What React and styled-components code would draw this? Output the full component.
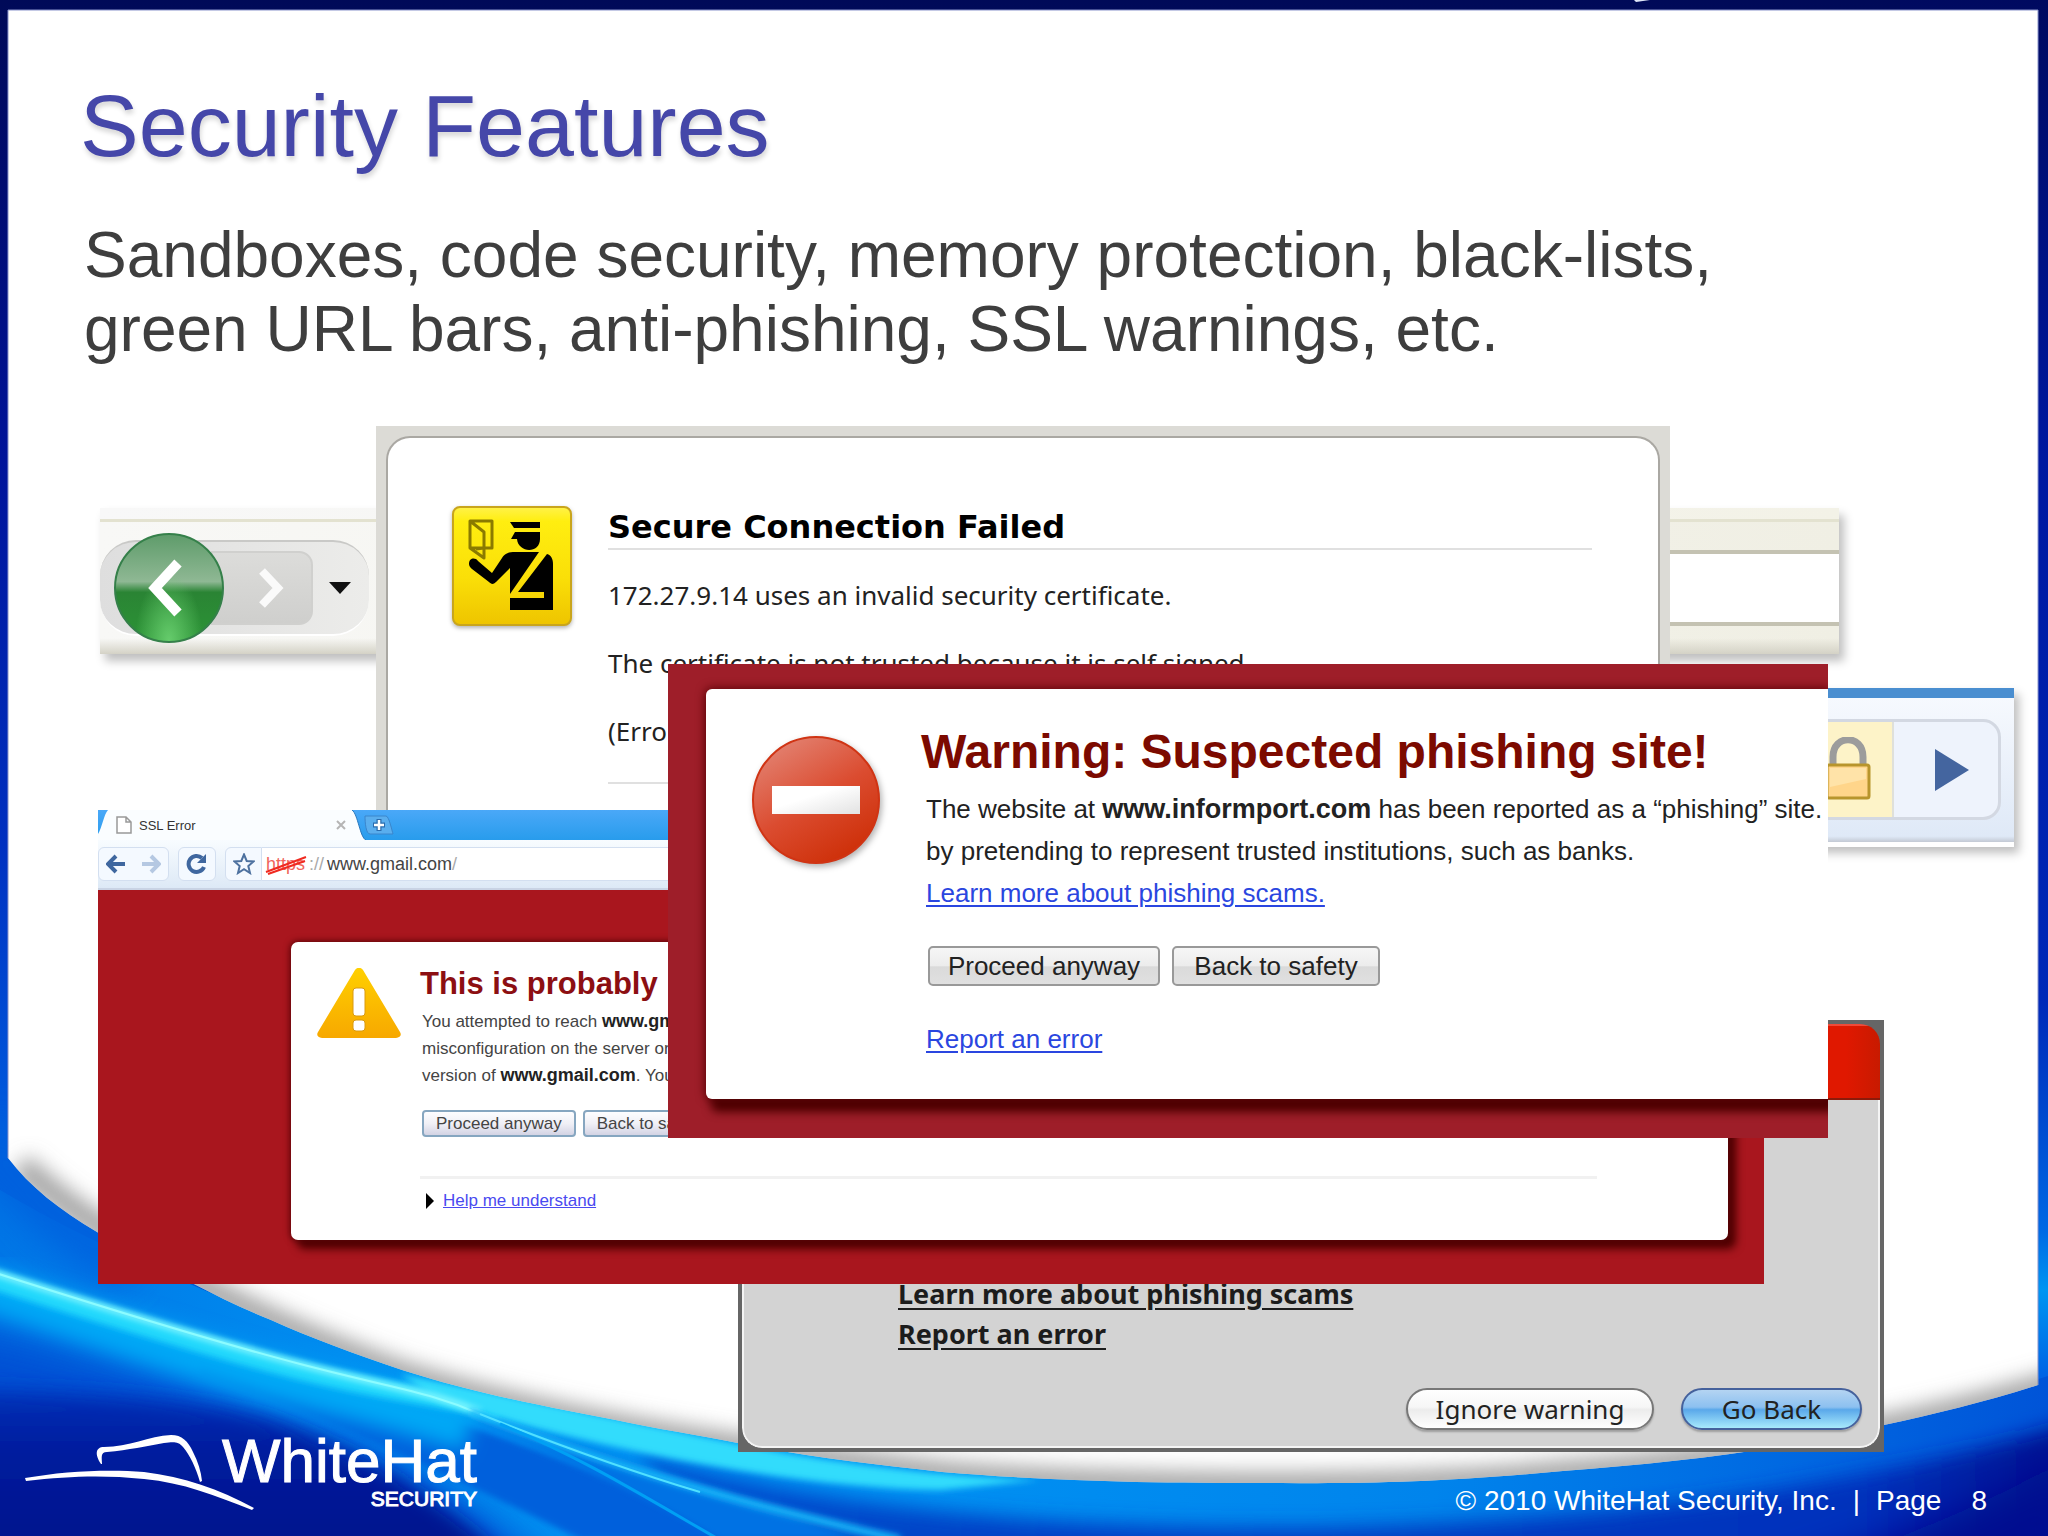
import styled, { createGlobalStyle } from "styled-components";

const sans = '"Liberation Sans", Arial, sans-serif';
const humanist = '"Noto Sans", "Open Sans", sans-serif';

const App = () => {
	return (
		<>
			<GlobalStyle />
			<Slide>
				<Backdrop />
				<Header>
					<Title>Security Features</Title>
					<Summary>
						Sandboxes, code security, memory protection, black-lists, green URL bars, anti-phishing,
						SSL warnings, etc.
					</Summary>
				</Header>
				<Collage>
					<FirefoxToolbar />
					<SafariToolbar />
					<SecureConnection />
					<MacWarning />
					<ChromeWindow />
					<PhishingWarning />
				</Collage>
				<Footer>
					<Logo>
						<HatIcon />
						<Wordmark>
							<Brand>WhiteHat</Brand>
							<BrandSub>SECURITY</BrandSub>
						</Wordmark>
					</Logo>
					<Copyright>
						<span>© 2010 WhiteHat Security, Inc.</span>
						<span>|</span>
						<span>Page</span>
						<PageNumber>8</PageNumber>
					</Copyright>
				</Footer>
			</Slide>
		</>
	);
};

export default App;

const sheetPath =
	"M8 10H2038V1385C1985 1402 1935 1414 1884 1425C1790 1449 1680 1462 1563 1471C1450 1482 1360 1484 1282 1483C1230 1483 1180 1483 1136 1482C1065 1480 1000 1477 942 1472C880 1465 820 1458 763 1448C715 1438 670 1431 630 1423C580 1413 530 1404 485 1393C455 1386 428 1378 402 1370C355 1354 311 1338 271 1320C243 1309 219 1297 194 1284C159 1268 128 1252 97 1232C60 1210 30 1187 8 1158Z";

const Backdrop = () => (
	<BackdropSvg viewBox='0 0 2048 1536' preserveAspectRatio='none' aria-hidden='true'>
		<defs>
			<linearGradient id='night' x1='0' y1='0' x2='0' y2='1'>
				<stop offset='0' stopColor='#000a58' />
				<stop offset='.12' stopColor='#000c70' />
				<stop offset='.3' stopColor='#00149a' />
				<stop offset='.55' stopColor='#0030c0' />
				<stop offset='.72' stopColor='#0058dc' />
				<stop offset='.8' stopColor='#0068e0' />
				<stop offset='1' stopColor='#0028a8' />
			</linearGradient>
			<linearGradient id='edge' x1='0' y1='0' x2='0' y2='1'>
				<stop offset='0' stopColor='#000a60' />
				<stop offset='.3' stopColor='#0018a0' />
				<stop offset='.65' stopColor='#0028b8' />
				<stop offset='.8' stopColor='#0068e4' />
				<stop offset='.84' stopColor='#0095f2' />
				<stop offset='.9' stopColor='#0060e4' />
				<stop offset='1' stopColor='#0018a0' />
			</linearGradient>
			<linearGradient id='sea' x1='0' y1='0' x2='1' y2='0'>
				<stop offset='0' stopColor='#0076e6' />
				<stop offset='.2' stopColor='#0092f2' />
				<stop offset='.45' stopColor='#0090f2' />
				<stop offset='.7' stopColor='#0084ec' />
				<stop offset='.9' stopColor='#0064e0' />
				<stop offset='1' stopColor='#0054d8' />
			</linearGradient>
			<linearGradient id='deep' x1='0' y1='0' x2='1' y2='0'>
				<stop offset='0' stopColor='#0050d0' />
				<stop offset='.25' stopColor='#0042c6' />
				<stop offset='.55' stopColor='#003cc0' />
				<stop offset='.85' stopColor='#0030bc' />
				<stop offset='1' stopColor='#00108c' />
			</linearGradient>
			<linearGradient id='abyss' x1='0' y1='1380' x2='0' y2='1536' gradientUnits='userSpaceOnUse'>
				<stop offset='0' stopColor='#0034bc' />
				<stop offset='.45' stopColor='#001c9e' />
				<stop offset='1' stopColor='#00148e' />
			</linearGradient>
			<filter id='soft4' x='-20%' y='-20%' width='140%' height='140%'>
				<feGaussianBlur stdDeviation='3' />
			</filter>
			<filter id='soft12' x='-20%' y='-20%' width='140%' height='160%'>
				<feGaussianBlur stdDeviation='10' />
			</filter>
			<filter id='soft24' x='-20%' y='-30%' width='140%' height='160%'>
				<feGaussianBlur stdDeviation='20' />
			</filter>
			<clipPath id='sheet'>
				<path d={sheetPath} />
			</clipPath>
		</defs>
		<rect width='2048' height='1536' fill='url(#night)' />
		<rect x='1900' width='148' height='1536' fill='url(#edge)' />
		<path
			d='M0 1190C100 1250 300 1340 480 1380C800 1460 1100 1480 1300 1478C1600 1478 1850 1440 2048 1376V1536H0Z'
			fill='url(#sea)'
		/>
		<path d='M-20 1130C20 1190 70 1230 130 1270' stroke='#0060de' strokeWidth='50' fill='none' filter='url(#soft24)' />
		{/* dark water under the main wave */}
		<path d='M-80 1320C60 1340 240 1400 350 1440C440 1480 520 1530 600 1620H-80Z' fill='#0050d4' filter='url(#soft24)' />
		<path d='M-80 1390C60 1392 180 1396 270 1420C360 1450 450 1500 540 1590H-80Z' fill='url(#abyss)' filter='url(#soft12)' />
		<path
			d='M640 1455C800 1500 1000 1528 1300 1528C1600 1524 1860 1488 2080 1420V1600H700C690 1560 660 1500 640 1455Z'
			fill='url(#deep)'
			filter='url(#soft12)'
		/>
		<path d='M1780 1580C1900 1540 2000 1500 2080 1450V1600H1780Z' fill='#001090' filter='url(#soft24)' />
		{/* folds running down to the right */}
		<path d='M200 1372C330 1420 460 1480 582 1540H760C600 1470 420 1400 200 1352Z' fill='#0060dc' filter='url(#soft4)' />
		<path d='M440 1405C540 1450 640 1490 720 1540H860C740 1500 580 1440 440 1405Z' fill='#0072e4' filter='url(#soft4)' />
		{/* bright crest */}
		<path
			d='M-20 1286C100 1325 200 1360 300 1385S400 1410 470 1430'
			stroke='#00a8f6'
			strokeWidth='44'
			fill='none'
			filter='url(#soft12)'
		/>
		<path
			d='M-20 1276C80 1308 200 1346 300 1371S440 1395 500 1412'
			stroke='#22d8fc'
			strokeWidth='18'
			fill='none'
			filter='url(#soft4)'
		/>
		<path
			d='M400 1374C520 1398 640 1424 780 1452C860 1466 940 1476 1040 1480L940 1490C800 1488 600 1450 440 1402Z'
			fill='#30dcfc'
			filter='url(#soft4)'
		/>
		<path
			d='M-20 1268C80 1300 200 1338 300 1364S430 1392 480 1412'
			stroke='#8cfcff'
			strokeWidth='6'
			fill='none'
			filter='url(#soft4)'
		/>
		<path d='M-20 1268C80 1300 200 1338 300 1364S430 1392 480 1414' stroke='#8cfcff' strokeWidth='2' fill='none' />
		<path
			d='M470 1412C560 1446 660 1480 770 1508S860 1530 900 1540'
			stroke='#18b8fa'
			strokeWidth='8'
			fill='none'
			filter='url(#soft4)'
		/>
		<path d='M480 1414C560 1446 640 1474 700 1492' stroke='#50e0ff' strokeWidth='2' fill='none' />
		<path d='M500 1424C580 1456 650 1500 720 1540' stroke='#00a0f4' strokeWidth='3' fill='none' />
		<path d={sheetPath} fill='#fff' />
		<path d='M8 1158V10H2038V1385' fill='none' stroke='#8a94cc' strokeWidth='1' />
		<g clipPath='url(#sheet)'>
			<path
				d='M20 1165C100 1240 240 1314 402 1374C560 1424 760 1452 942 1474C1080 1486 1400 1492 1563 1473C1750 1460 1930 1422 2060 1382'
				stroke='#888'
				strokeWidth='26'
				strokeOpacity='.75'
				fill='none'
				filter='url(#soft12)'
			/>
		</g>
		<path d='M1634 0H1650L1636 2Z' fill='#dfe6f8' />
	</BackdropSvg>
);

const HatIcon = () => (
	<svg width='232' height='76' viewBox='0 0 232 76' fill='#fff' aria-hidden='true'>
		<path d='M1 43C40 36 85 34 120 37C160 42 195 54 230 73L228 75C190 60 160 48 120 44C80 40 45 41 2 46Z' />
		<path d='M77 29C71 20 71 12 80 12C105 12 125 1 147 0C158 0 164 6 169 17C174 27 177 36 178 46L176 47C172 33 166 20 159 12C154 6 149 7 140 8C122 11 105 15 83 17C76 17 78 23 78 29Z' />
	</svg>
);

const FirefoxToolbar = () => (
	<FirefoxBar>
		<FirefoxStrip />
		<FirefoxRow>
			<NavPill>
				<BackButton aria-label='Back'>
					<svg width='48' height='60' viewBox='0 0 48 60' aria-hidden='true'>
						<path d='M33 5L10 30L33 55' stroke='#fff' strokeWidth='10' fill='none' />
					</svg>
				</BackButton>
				<ForwardButton aria-label='Forward'>
					<svg width='30' height='40' viewBox='0 0 30 40' aria-hidden='true'>
						<path d='M6 3L22 20L6 37' stroke='#fafafa' strokeWidth='8' fill='none' />
					</svg>
				</ForwardButton>
				<HistoryButton aria-label='Recent pages'>
					<svg width='24' height='14' viewBox='0 0 24 14' aria-hidden='true'>
						<path d='M1 1H23L12 13Z' fill='#111' />
					</svg>
				</HistoryButton>
			</NavPill>
			<FirefoxField aria-label='Address' />
		</FirefoxRow>
	</FirefoxBar>
);

const SafariToolbar = () => (
	<BlueBar>
		<BlueField>
			<LockCell>
				<svg width='48' height='66' viewBox='0 0 48 66' aria-hidden='true'>
					<path d='M9 30V20C9 -3 39 -3 39 20V30' stroke='#9c9c9c' strokeWidth='7' fill='none' />
					<rect x='3' y='28' width='42' height='33' rx='2' fill='#ffd58a' stroke='#b8952c' strokeWidth='3' />
					<path d='M6 31H42V42L6 50Z' fill='#ffe3a8' />
				</svg>
			</LockCell>
			<GoButton aria-label='Go'>
				<svg width='36' height='42' viewBox='0 0 36 42' aria-hidden='true'>
					<path d='M1 0L35 21L1 42Z' fill='#44659f' />
				</svg>
			</GoButton>
		</BlueField>
	</BlueBar>
);

const SecureConnection = () => (
	<SecureFrame>
		<SecureCard>
			<OfficerIcon />
			<SecureText>
				<SecureTitle>Secure Connection Failed</SecureTitle>
				<p>172.27.9.14 uses an invalid security certificate.</p>
				<p>The certificate is not trusted because it is self signed.</p>
				<p>(Error</p>
				<SecureRule />
			</SecureText>
		</SecureCard>
	</SecureFrame>
);

const OfficerIcon = () => (
	<OfficerSvg viewBox='0 0 120 120' aria-hidden='true'>
		<defs>
			<linearGradient id='yellow' x1='0' y1='0' x2='0' y2='1'>
				<stop offset='0' stopColor='#fff24a' />
				<stop offset='.12' stopColor='#ffee10' />
				<stop offset='.6' stopColor='#fadf08' />
				<stop offset='1' stopColor='#eec400' />
			</linearGradient>
		</defs>
		<rect x='1' y='1' width='118' height='118' rx='7' fill='url(#yellow)' stroke='#c9a51c' strokeWidth='2' />
		<path d='M18 15H40V42H18ZM18 15L32 26V52L18 42M32 42L24 43' fill='none' stroke='#8a7a00' strokeWidth='3' strokeLinejoin='round' />
		<path d='M58 16H88V22H62Z' />
		<path d='M63 26H88V33C88 48 66 47 65 33H59Z' />
		<path d='M17 58C17 52 23 51 26 55L40 67L50 52C53 47 57 46 63 46H87L58 88V62L44 76C41 79 39 78 37 76L20 63C18 61 17 60 17 58Z' />
		<path d='M95 48C99 49 101 53 101 58V104H58V92H92V86H66Z' />
	</OfficerSvg>
);

const MacWarning = () => (
	<MacFrame>
		<MacPanel>
			<MacBanner />
			<MacBody>
				<MacLinks>
					<a href='#learn'>Learn more about phishing scams</a>
					<a href='#report'>Report an error</a>
				</MacLinks>
				<MacActions>
					<AquaButton $width={248}>Ignore warning</AquaButton>
					<AquaButton $width={181} $primary>
						Go Back
					</AquaButton>
				</MacActions>
			</MacBody>
		</MacPanel>
	</MacFrame>
);

const ChromeWindow = () => (
	<ChromeFrame>
		<TabStrip>
			<svg width='270' height='30' viewBox='0 0 270 30' aria-hidden='true'>
				<path d='M0 30V24C4 18 6 4 10 0H254C260 4 262 28 268 30Z' fill='#fafdff' />
				<path d='M254 0C260 4 262 28 268 30' stroke='#2a78bc' fill='none' />
			</svg>
			<Tab>
				<svg width='16' height='18' viewBox='0 0 16 18' aria-hidden='true'>
					<path d='M1 1H10L15 6V17H1ZM10 1V6H15' fill='#fff' stroke='#999' strokeWidth='1.5' />
				</svg>
				<span>SSL Error</span>
				<TabClose aria-label='Close tab'>
					<svg width='10' height='10' viewBox='0 0 10 10' aria-hidden='true'>
						<path d='M1 1L9 9M9 1L1 9' stroke='#b5b5b5' strokeWidth='2' />
					</svg>
				</TabClose>
			</Tab>
			<NewTab aria-label='New tab'>
				<svg width='32' height='20' viewBox='0 0 32 20' aria-hidden='true'>
					<path d='M3 1H24C27 1 30 16 31 19H8C4 19 3 8 3 1Z' fill='#5aaeee' stroke='#3a86cc' />
					<path d='M17 4V16M11 10H23' stroke='#2a6cae' strokeWidth='5' />
					<path d='M17 5V15M12 10H22' stroke='#fff' strokeWidth='2.5' />
				</svg>
			</NewTab>
		</TabStrip>
		<ChromeToolbar>
			<ToolGroup $width={71}>
				<button aria-label='Back'>
					<svg width='20' height='20' viewBox='0 0 20 20' aria-hidden='true'>
						<path d='M19 10H4M10 2L2 10L10 18' stroke='#3f679f' strokeWidth='4' fill='none' />
					</svg>
				</button>
				<button aria-label='Forward'>
					<svg width='20' height='20' viewBox='0 0 20 20' aria-hidden='true'>
						<path d='M1 10H16M10 2L18 10L10 18' stroke='#b5c8e2' strokeWidth='4' fill='none' />
					</svg>
				</button>
			</ToolGroup>
			<ToolGroup $width={38}>
				<button aria-label='Reload'>
					<svg width='22' height='22' viewBox='0 0 22 22' aria-hidden='true'>
						<path d='M18 14A8 8 0 1 1 16 5' stroke='#3f679f' strokeWidth='4' fill='none' />
						<path d='M20 1V10H11Z' fill='#3f679f' />
					</svg>
				</button>
			</ToolGroup>
			<ToolGroup $width={37} $joined>
				<button aria-label='Bookmark'>
					<svg width='22' height='22' viewBox='0 0 22 22' aria-hidden='true'>
						<path
							d='M11 1.5L13.7 8L20.5 8.5L15.3 13L17 20L11 16.2L5 20L6.7 13L1.5 8.5L8.3 8Z'
							stroke='#4d719f'
							strokeWidth='2'
							fill='#f4f9ff'
						/>
					</svg>
				</button>
			</ToolGroup>
			<Omnibox>
				<BadScheme>
					https
					<svg width='44' height='20' viewBox='0 0 44 20' aria-hidden='true'>
						<path d='M2 17L42 2M4 19L41 6' stroke='#f02a20' strokeWidth='2' fill='none' />
					</svg>
				</BadScheme>
				<Faint>://</Faint>www.gmail.com<Faint>/</Faint>
			</Omnibox>
		</ChromeToolbar>
		<ChromePage>
			<SslCard>
				<TriangleIcon />
				<SslText>
					<SslTitle>This is probably</SslTitle>
					<SslCopy>
						You attempted to reach <b>www.gm</b>
						<br />
						misconfiguration on the server or
						<br />
						version of <b>www.gmail.com</b>. You
					</SslCopy>
					<SslActions>
						<SmallButton>Proceed anyway</SmallButton>
						<SmallButton>Back to safety</SmallButton>
					</SslActions>
					<SslRule />
					<HelpRow>
						<svg width='8' height='16' viewBox='0 0 8 16' aria-hidden='true'>
							<path d='M0 0L8 8L0 16Z' />
						</svg>
						<a href='#help'>Help me understand</a>
					</HelpRow>
				</SslText>
			</SslCard>
		</ChromePage>
	</ChromeFrame>
);

const TriangleIcon = () => (
	<TriangleSvg viewBox='0 0 84 70' aria-hidden='true'>
		<defs>
			<linearGradient id='amber' x1='0' y1='0' x2='0' y2='1'>
				<stop offset='0' stopColor='#ffd000' />
				<stop offset='1' stopColor='#f7a800' />
			</linearGradient>
		</defs>
		<path d='M38 2C40 -1 44 -1 46 2L83 64C85 67 83 70 79 70H5C1 70 -1 67 1 64Z' fill='url(#amber)' />
		<rect x='36' y='20' width='12' height='28' rx='3' fill='#fff' stroke='#d99a10' />
		<rect x='36' y='52' width='12' height='11' rx='3' fill='#fff' stroke='#d99a10' />
	</TriangleSvg>
);

const PhishingWarning = () => (
	<PhishingFrame>
		<PhishingCard>
			<NoEntryIcon />
			<div>
				<PhishingTitle>Warning: Suspected phishing site!</PhishingTitle>
				<PhishingCopy>
					<p>
						The website at <b>www.informport.com</b> has been reported as a “phishing” site.
					</p>
					<p>by pretending to represent trusted institutions, such as banks.</p>
					<a href='#scams'>Learn more about phishing scams.</a>
					<PhishingActions>
						<LargeButton $width={232}>Proceed anyway</LargeButton>
						<LargeButton $width={208}>Back to safety</LargeButton>
					</PhishingActions>
					<a href='#error'>Report an error</a>
				</PhishingCopy>
			</div>
		</PhishingCard>
	</PhishingFrame>
);

const NoEntryIcon = () => (
	<NoEntrySvg viewBox='0 0 128 128' aria-hidden='true'>
		<defs>
			<linearGradient id='stop' x1='.2' y1='0' x2='.8' y2='1'>
				<stop offset='0' stopColor='#e38474' />
				<stop offset='.5' stopColor='#db4c30' />
				<stop offset='1' stopColor='#cc2c04' />
			</linearGradient>
			<linearGradient id='bar' x1='0' y1='0' x2='1' y2='1'>
				<stop offset='.4' stopColor='#fff' />
				<stop offset='1' stopColor='#e2e2e2' />
			</linearGradient>
		</defs>
		<circle cx='64' cy='64' r='63' fill='url(#stop)' stroke='#d03414' strokeWidth='2' />
		<rect x='20' y='50' width='88' height='28' fill='url(#bar)' />
	</NoEntrySvg>
);

const GlobalStyle = createGlobalStyle`
	* {
		box-sizing: border-box;
	}

	body {
		margin: 0;
		font-family: ${sans};
	}

	h1, h2, p {
		margin: 0;
	}

	button {
		margin: 0;
		padding: 0;
		border: 0;
		background: none;
		color: inherit;
		font: inherit;
	}

	svg {
		display: block;
		flex-shrink: 0;
	}
`;

const Slide = styled.main`
	position: relative;
	display: flex;
	flex-direction: column;
	min-height: 100vh;
	overflow: hidden;
`;

const BackdropSvg = styled.svg`
	position: absolute;
	inset: 0;
	width: 100%;
	height: 100%;
`;

const Header = styled.header`
	position: relative;
	padding: 77px 80px 34px;
`;

const Title = styled.h1`
	font-size: 88px;
	font-weight: 400;
	line-height: 98px;
	color: #4547a9;
	text-shadow: 1px 4px 5px rgba(0, 0, 0, 0.16);
`;

const Summary = styled.p`
	max-width: 1700px;
	margin-top: 43px;
	padding-left: 4px;
	font-size: 64px;
	line-height: 74px;
	color: #3e3e3e;
`;

const Collage = styled.section`
	position: relative;
	flex: 1;
	min-height: 1034px;
`;

/* every captured window sits freely on the collage */
const Capture = styled.article`
	position: absolute;
	display: flex;
	flex-direction: column;
	overflow: hidden;
`;

const FirefoxBar = styled(Capture)`
	top: 108px;
	left: 100px;
	right: 209px;
	overflow: visible;
	box-shadow: 5px 7px 9px rgba(0, 0, 0, 0.25);
`;

const FirefoxStrip = styled.div`
	height: 14px;
	background: linear-gradient(90deg, #f8f8f8, #f3f2e7);
	border-bottom: 3px solid #e3e2d0;
`;

const FirefoxRow = styled.div`
	display: flex;
	align-items: center;
	gap: 20px;
	height: 132px;
	background: linear-gradient(rgba(255, 255, 255, 0) 88%, #d4d2c6), linear-gradient(90deg, #f8f8f6, #f0efe4);
`;

const NavPill = styled.div`
	display: flex;
	align-items: center;
	width: 269px;
	height: 96px;
	padding-left: 14px;
	border-top: 2px solid #c9c9c7;
	border-bottom: 2px solid #fff;
	border-radius: 36px;
	background: linear-gradient(90deg, #dedede, #ececea);
`;

const BackButton = styled.button`
	z-index: 1;
	display: grid;
	place-items: center;
	flex-shrink: 0;
	width: 110px;
	height: 110px;
	border: 2px solid #35804a;
	border-radius: 50%;
	background: radial-gradient(ellipse at 50% 100%, #66cc6c, rgba(80, 190, 90, 0) 45%),
		linear-gradient(#5f9c6b, #8fb894 44%, #2a8434 54%, #2c9436);
`;

const ForwardButton = styled.button`
	display: grid;
	place-items: center;
	width: 102px;
	height: 74px;
	margin-left: -13px;
	padding-left: 18px;
	border: 2px solid #d0d0ce;
	border-radius: 0 14px 14px 0;
	background: linear-gradient(#dcdcda, #cfcfcd);
`;

const HistoryButton = styled.button`
	margin-left: 15px;
`;

const FirefoxField = styled.input`
	flex: 1;
	height: 76px;
	border: solid #c4c2b2;
	border-width: 4px 0;
	background: #fff;
`;

const BlueBar = styled(Capture)`
	top: 288px;
	left: 700px;
	right: 34px;
	height: 159px;
	padding: 21px 13px;
	overflow: visible;
	border-top: 10px solid #4a8ed0;
	border-bottom: 5px solid #fff;
	background: linear-gradient(#f6f9fe, #dfe9f7 96%, #c3c9d4);
	box-shadow: 5px 6px 9px rgba(0, 0, 0, 0.25);
`;

const BlueField = styled.div`
	display: flex;
	justify-content: flex-end;
	height: 101px;
	overflow: hidden;
	border: 3px solid #d3d8e2;
	border-radius: 18px;
	background: #eef3fc;
`;

const LockCell = styled.div`
	display: flex;
	flex: 1;
	align-items: center;
	justify-content: flex-end;
	padding-right: 20px;
	border-right: 2px solid #dfe0da;
	background: #fdf3c8;
`;

const GoButton = styled.button`
	width: 104px;
	padding-left: 40px;
`;

const SecureFrame = styled(Capture)`
	top: 26px;
	left: 376px;
	right: 378px;
	padding: 10px 10px 0;
	background: #dcdbd6;
`;

const SecureCard = styled.div`
	display: flex;
	gap: 36px;
	min-height: 440px;
	padding: 68px 66px 0 64px;
	border: 2px solid #aaa8a3;
	border-bottom: 0;
	border-radius: 24px 24px 0 0;
	background: #fff;
`;

const OfficerSvg = styled.svg`
	width: 120px;
	height: 120px;
	filter: drop-shadow(0 2px 2px rgba(0, 0, 0, 0.3));
`;

const SecureText = styled.div`
	flex: 1;
	font-family: ${humanist};
	font-size: 26px;
	line-height: 34px;
	color: #222;
	white-space: nowrap;

	p {
		margin-bottom: 34px;
	}
`;

const SecureTitle = styled.h2`
	margin-bottom: 28px;
	border-bottom: 2px solid #e0e0e0;
	font-family: "DejaVu Sans", Verdana, sans-serif;
	font-size: 32px;
	line-height: 42px;
	color: #000;
`;

const SecureRule = styled.hr`
	margin: 0;
	border: 0;
	border-top: 2px solid #e0e0e0;
`;

const MacFrame = styled(Capture)`
	top: 620px;
	left: 738px;
	right: 164px;
	height: 432px;
	padding: 4px;
	background: #666;
`;

const MacPanel = styled.div`
	display: flex;
	flex: 1;
	flex-direction: column;
	overflow: hidden;
	border-radius: 20px;
`;

const MacBanner = styled.div`
	height: 76px;
	border-top: 2px solid #f04a38;
	border-bottom: 2px solid #8c1a0a;
	background: linear-gradient(90deg, #e01800 97%, #c81a00);
`;

const MacBody = styled.div`
	display: flex;
	flex: 1;
	flex-direction: column;
	justify-content: flex-end;
	gap: 34px;
	padding: 0 16px 16px 154px;
	border: 2px solid #f4f4f4;
	border-top: 0;
	border-radius: 0 0 20px 20px;
	background: #d3d3d3;
	font-family: ${humanist};
`;

const MacLinks = styled.div`
	display: flex;
	flex-direction: column;
	align-items: flex-start;
	font-size: 27px;
	font-weight: 700;
	line-height: 40px;

	a {
		color: #1c1c1c;
		text-underline-offset: 4px;
	}
`;

const MacActions = styled.div`
	display: flex;
	justify-content: flex-end;
	gap: 27px;
`;

const AquaButton = styled.button`
	width: ${({ $width }) => $width}px;
	height: 42px;
	border: 2px solid ${({ $primary }) => ($primary ? "#45619c" : "#777")};
	border-radius: 21px;
	background: ${({ $primary }) =>
		$primary
			? "linear-gradient(#b4d4f2, #8cc0f0 45%, #5aa8ea 52%, #a8eafc)"
			: "linear-gradient(#fff, #f6f6f6 45%, #ececec 52%, #fff)"};
	box-shadow: 0 2px 2px rgba(0, 0, 0, 0.25);
	font-size: 26px;
	line-height: 34px;
	color: #222;
`;

const ChromeFrame = styled(Capture)`
	top: 410px;
	left: 98px;
	right: 284px;
`;

const TabStrip = styled.div`
	position: relative;
	display: flex;
	align-items: center;
	height: 30px;
	background: linear-gradient(#4aa8f8, #289cec);
`;

const Tab = styled.div`
	position: absolute;
	display: flex;
	align-items: center;
	gap: 7px;
	width: 248px;
	padding-left: 18px;
	font-size: 13px;
	color: #333;
`;

const TabClose = styled.button`
	margin-left: auto;
`;

const NewTab = styled.button`
	margin-left: -6px;
`;

const ChromeToolbar = styled.div`
	display: flex;
	align-items: center;
	height: 50px;
	border-bottom: 2px solid #c9d3e4;
	background: linear-gradient(#f8fcff, #dde9f6);
`;

const ToolGroup = styled.div`
	display: flex;
	align-items: center;
	justify-content: space-around;
	width: ${({ $width }) => $width}px;
	height: 34px;
	margin-right: ${({ $joined }) => ($joined ? 0 : 9)}px;
	border: 1px solid #d3dff0;
	border-radius: ${({ $joined }) => ($joined ? "6px 0 0 6px" : "6px")};
	background: #f4f9ff;
`;

const Omnibox = styled.div`
	display: flex;
	flex: 1;
	align-items: center;
	height: 34px;
	padding-left: 4px;
	border: solid #d3dff0;
	border-width: 1px 0;
	background: #fff;
	font-size: 18px;
	color: #444;
`;

const BadScheme = styled.span`
	position: relative;
	margin-right: 4px;
	color: #f0645c;

	svg {
		position: absolute;
		left: -2px;
		top: 1px;
	}
`;

const Faint = styled.span`
	color: #aaa;

	&:not(:last-child) {
		margin-right: 3px;
	}
`;

const ChromePage = styled.div`
	padding: 52px 36px 44px 193px;
	background: #a9161e;
`;

const SslCard = styled.div`
	display: flex;
	gap: 19px;
	padding: 24px 131px 27px 26px;
	border-radius: 7px;
	background: #fff;
	box-shadow: 0 0 6px 1px #5c0408, 7px 8px 8px 1px #4c0000;
`;

const TriangleSvg = styled.svg`
	width: 84px;
	height: 70px;
	margin-top: 2px;
`;

const SslText = styled.div`
	flex: 1;
	min-width: 0;
	white-space: nowrap;
`;

const SslTitle = styled.h2`
	font-size: 31px;
	line-height: 36px;
	color: #8c0f12;
`;

const SslCopy = styled.p`
	margin-top: 6px;
	padding-left: 2px;
	font-size: 17px;
	line-height: 27px;
	color: #444;

	b {
		font-size: 18px;
		line-height: 20px;
		color: #222;
	}
`;

const SslActions = styled.div`
	display: flex;
	gap: 7px;
	margin-top: 21px;
	padding-left: 2px;
`;

const SmallButton = styled.button`
	height: 27px;
	padding: 0 12px;
	border: 2px solid #86a6c0;
	border-radius: 4px;
	background: linear-gradient(#fdfdff, #f0f0f6 50%, #d3d3e4);
	font-size: 17px;
	line-height: 22px;
	color: #444;
`;

const SslRule = styled.hr`
	height: 3px;
	margin: 39px 0 10px;
	border: 0;
	background: #f1f1f1;
`;

const HelpRow = styled.div`
	display: flex;
	align-items: center;
	gap: 9px;
	padding-left: 6px;
	font-size: 17px;
	line-height: 24px;

	a {
		color: #4a4af0;
	}
`;

const PhishingFrame = styled(Capture)`
	top: 264px;
	left: 668px;
	right: 220px;
	padding: 25px 0 39px 38px;
	background: #9e1e29;
`;

const PhishingCard = styled.div`
	display: flex;
	gap: 41px;
	padding: 35px 0 39px 46px;
	border-radius: 6px 0 0 6px;
	background: #fff;
	box-shadow: 0 0 10px 1px #5c0408, 6px 12px 10px 1px #4c0000;
	white-space: nowrap;
`;

const NoEntrySvg = styled.svg`
	width: 128px;
	height: 128px;
	margin-top: 12px;
	filter: drop-shadow(2px 3px 3px rgba(0, 0, 0, 0.3));
`;

const PhishingTitle = styled.h2`
	font-size: 48px;
	line-height: 56px;
	color: #7c0a00;
`;

const PhishingCopy = styled.div`
	margin-top: 8px;
	padding-left: 5px;
	font-size: 26px;
	line-height: 42px;
	color: #222;

	a {
		display: block;
		color: #2a46e0;
		text-underline-offset: 3px;
	}

	b {
		font-size: 27px;
		line-height: 36px;
	}
`;

const PhishingActions = styled.div`
	display: flex;
	gap: 12px;
	margin: 32px 0;
	padding-left: 2px;
`;

const LargeButton = styled.button`
	width: ${({ $width }) => $width}px;
	height: 40px;
	border: 2px solid #999;
	border-radius: 5px;
	background: linear-gradient(#f6f6f6, #ececec 50%, #dadada 52%, #e0e0e0);
	font-size: 26px;
	line-height: 36px;
`;

const Footer = styled.footer`
	position: relative;
	display: flex;
	align-items: flex-end;
	justify-content: space-between;
	padding: 0 61px 19px 24px;
	color: #fff;
`;

const Logo = styled.div`
	display: flex;
	padding-bottom: 6px;
	-webkit-text-stroke: 1px #fff;
`;

const Wordmark = styled.div`
	display: flex;
	flex-direction: column;
	align-items: flex-end;
	margin-left: -34px;
`;

const Brand = styled.span`
	font-size: 62px;
	line-height: 52px;
`;

const BrandSub = styled.span`
	font-size: 21px;
	line-height: 24px;
`;

const Copyright = styled.div`
	display: flex;
	gap: 16px;
	font-size: 28px;
	line-height: 32px;
`;

const PageNumber = styled.span`
	padding-left: 14px;
`;
